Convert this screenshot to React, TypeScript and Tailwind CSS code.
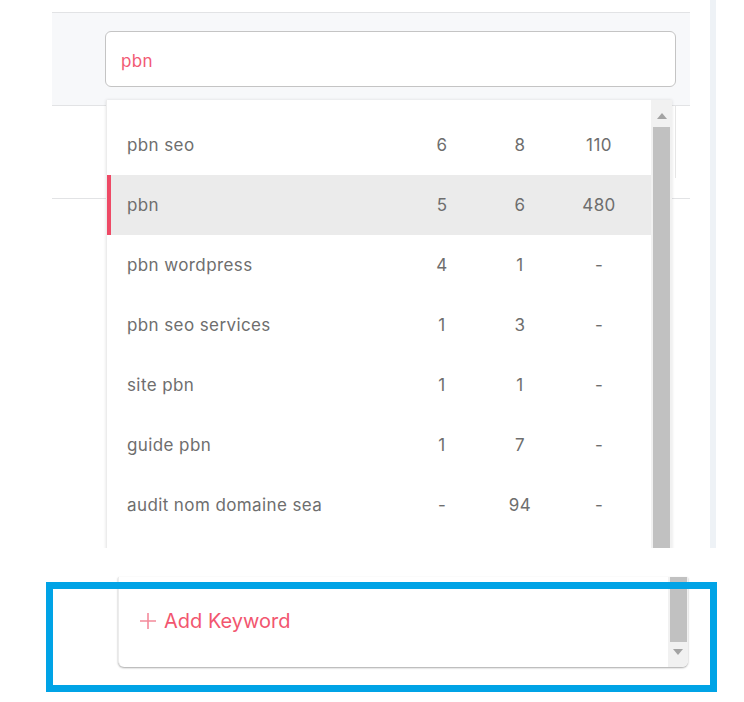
import React from "react";

const rows = [
  { k: "pbn seo", a: "6", b: "8", c: "110" },
  { k: "pbn", a: "5", b: "6", c: "480", active: true },
  { k: "pbn wordpress", a: "4", b: "1", c: "-" },
  { k: "pbn seo services", a: "1", b: "3", c: "-" },
  { k: "site pbn", a: "1", b: "1", c: "-" },
  { k: "guide pbn", a: "1", b: "7", c: "-" },
  { k: "audit nom domaine sea", a: "-", b: "94", c: "-" },
];

function Up() {
  return (
    <svg width="10" height="6" viewBox="0 0 10 6">
      <polygon points="5,0 10,6 0,6" fill="#a3a3a3" />
    </svg>
  );
}
function Down() {
  return (
    <svg width="10" height="6" viewBox="0 0 10 6">
      <polygon points="0,0 10,0 5,6" fill="#a3a3a3" />
    </svg>
  );
}

export default function App() {
  return (
    <div className="w-[744px] h-[702px] bg-white overflow-hidden font-['Inter',sans-serif] text-[#6e6e6e]">
      {/* top capture */}
      <div className="relative h-[548px] flex overflow-hidden">
        <div className="w-[52px] shrink-0" />
        <div className="w-[638px] shrink-0 flex flex-col">
          <div className="h-[12px] shrink-0" />
          <div className="h-[94px] shrink-0 bg-[#f7f8fa] border-y border-[#e2e3e5] pl-[53px] pt-[18px]">
            <div className="w-[571px] h-[56px] bg-white border border-[#c4c4c4] rounded-[6px] flex items-center pl-[15px] pt-[5px] text-[17px] tracking-[0.3px] text-[#f25a74]">
              pbn
            </div>
          </div>
          <div className="h-[93px] shrink-0 border-b border-[#e2e3e5] flex justify-end">
            <div className="w-[15px] h-[72px] border-l border-[#e6e6e6]" />
          </div>
        </div>
        <div className="w-[20px] shrink-0" />
        <div className="w-[6px] shrink-0 bg-[#eef2f6]" />

        {/* dropdown */}
        <div className="absolute left-[106px] top-[100px] w-[566px] h-[470px] bg-white border-l border-[#ececec] shadow-[0_0_3px_rgba(0,0,0,0.12)] flex">
          <div className="flex-1 pt-[15px] flex flex-col">
            {rows.map((r) => (
              <div
                key={r.k}
                className={
                  r.active
                    ? "h-[60px] shrink-0 flex items-center bg-[#ebebeb] border-l-[4px] border-[#ee4a66] pl-[16px] pt-[2px] text-[17px] tracking-[0.4px]"
                    : "h-[60px] shrink-0 flex items-center pl-[20px] pt-[2px] text-[17px] tracking-[0.4px]"
                }
              >
                <div className="w-[285px]">{r.k}</div>
                <div className="w-[60px] text-center">{r.a}</div>
                <div className="w-[60px] ml-[18px] text-center">{r.b}</div>
                <div className="w-[60px] ml-[19px] text-center">{r.c}</div>
              </div>
            ))}
          </div>
          <div className="w-[21px] bg-[#f1f1f1] flex flex-col items-center">
            <div className="h-[27px] shrink-0 flex items-center justify-center pt-[4px]">
              <Up />
            </div>
            <div className="w-[17px] flex-1 bg-[#c1c1c1]" />
          </div>
        </div>
      </div>

      <div className="h-[29px]" />

      {/* bottom capture */}
      <div className="relative h-[125px]">
        <div className="ml-[118px] w-[570px] h-[90px] bg-white rounded-b-[6px] border-l border-[#ececec] shadow-[0_1px_2px_rgba(0,0,0,0.35)] flex overflow-hidden">
          <div className="flex-1 flex items-center pl-[20px] pb-[2px] text-[20px] text-[#f2566f] gap-[7px]">
            <svg width="18" height="18" viewBox="0 0 18 18">
              <path d="M9 1V17M1 9H17" stroke="#f48a9b" strokeWidth="1.6" fill="none" />
            </svg>
            <span>Add Keyword</span>
          </div>
          <div className="w-[20px] bg-[#f1f1f1] flex flex-col items-center">
            <div className="w-[17px] h-[65px] shrink-0 bg-[#c1c1c1]" />
            <div className="h-[20px] flex items-center justify-center">
              <Down />
            </div>
          </div>
        </div>
        {/* annotation box */}
        <div className="absolute left-[46px] top-[5px] w-[671px] h-[110px] border-[7px] border-[#00a3e6]" />
      </div>
    </div>
  );
}
